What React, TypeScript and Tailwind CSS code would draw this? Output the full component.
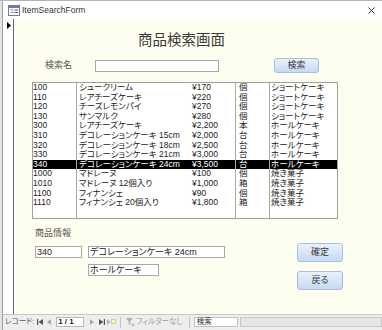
import React from "react";

type Item = { id: string; name: string; price: string; unit: string; cat: string };

const items: Item[] = [
  { id: "100", name: "シュークリーム", price: "¥170", unit: "個", cat: "ショートケーキ" },
  { id: "110", name: "レアチーズケーキ", price: "¥220", unit: "個", cat: "ショートケーキ" },
  { id: "120", name: "チーズレモンパイ", price: "¥270", unit: "個", cat: "ショートケーキ" },
  { id: "130", name: "サンマルク", price: "¥280", unit: "個", cat: "ショートケーキ" },
  { id: "300", name: "レアチーズケーキ", price: "¥2,200", unit: "本", cat: "ホールケーキ" },
  { id: "310", name: "デコレーションケーキ 15cm", price: "¥2,000", unit: "台", cat: "ホールケーキ" },
  { id: "320", name: "デコレーションケーキ 18cm", price: "¥2,500", unit: "台", cat: "ホールケーキ" },
  { id: "330", name: "デコレーションケーキ 21cm", price: "¥3,000", unit: "台", cat: "ホールケーキ" },
  { id: "340", name: "デコレーションケーキ 24cm", price: "¥3,500", unit: "台", cat: "ホールケーキ" },
  { id: "1000", name: "マドレーヌ", price: "¥100", unit: "個", cat: "焼き菓子" },
  { id: "1010", name: "マドレーヌ 12個入り", price: "¥1,000", unit: "箱", cat: "焼き菓子" },
  { id: "1100", name: "フィナンシェ", price: "¥90", unit: "個", cat: "焼き菓子" },
  { id: "1110", name: "フィナンシェ 20個入り", price: "¥1,800", unit: "箱", cat: "焼き菓子" },
];

const SELECTED = 8;

function Column({
  field,
  className,
  pad,
}: {
  field: keyof Item;
  className: string;
  pad: string;
}) {
  return (
    <div className={`flex flex-col ${className}`}>
      {items.map((it, i) => (
        <div
          key={it.id}
          className={`h-[9.6px] leading-[9.6px] whitespace-nowrap overflow-hidden ${pad} ${
            i === SELECTED ? "bg-black text-white" : "text-[#1c1c1c]"
          }`}
        >
          {it[field]}
        </div>
      ))}
    </div>
  );
}

function Button({ label }: { label: string }) {
  return (
    <div className="flex h-full w-full items-center justify-center rounded-[3px] border border-[#a3c0e6] bg-linear-to-b from-[#eaf1fb] to-[#c6daf3] text-[9px] text-[#3a3a3a]">
      {label}
    </div>
  );
}

function NavBar() {
  return (
    <div className="flex h-[16px] items-start border-t border-[#c8c8c8] bg-[#eeeeee] pt-[2px] text-[7.5px]">
      <span className="ml-[2px] h-[10px] leading-[10px] text-[#4a5a75]">レコード:</span>
      {/* first */}
      <svg className="ml-[3px] mt-[2px]" width="6" height="6" viewBox="0 0 6 6">
        <rect x="0" y="0" width="1.2" height="6" fill="#555" />
        <polygon points="6,0 6,6 1.5,3" fill="#555" />
      </svg>
      {/* prev */}
      <svg className="ml-[4px] mt-[2px]" width="4" height="6" viewBox="0 0 4 6">
        <polygon points="4,0 4,6 0,3" fill="#a8a8a8" />
      </svg>
      <div className="ml-[5px] flex h-[10px] w-[28px] items-center border border-[#b8b8b8] bg-white pl-[1px] text-[8px] font-bold text-[#222]">
        1 / 1
      </div>
      {/* next */}
      <svg className="ml-[6px] mt-[2px]" width="4" height="6" viewBox="0 0 4 6">
        <polygon points="0,0 0,6 4,3" fill="#a8a8a8" />
      </svg>
      {/* last */}
      <svg className="ml-[5px] mt-[2px]" width="6" height="6" viewBox="0 0 6 6">
        <polygon points="0,0 0,6 4.5,3" fill="#555" />
        <rect x="4.8" y="0" width="1.2" height="6" fill="#555" />
      </svg>
      {/* new */}
      <svg className="ml-[2px] mt-[1px]" width="9" height="8" viewBox="0 0 9 8">
        <polygon points="0,1 0,7 3.5,4" fill="#b4b4b4" />
        <rect x="4.5" y="1.5" width="4" height="4" fill="#fff6c8" stroke="#d8c37a" strokeWidth="0.8" />
      </svg>
      <div className="ml-[4px] h-[11px] w-px bg-[#c4c4c4]" />
      {/* filter */}
      <svg className="ml-[5px] mt-[1px]" width="9" height="9" viewBox="0 0 9 9">
        <polygon points="0,0 7,0 4.3,3.5 4.3,7 2.7,6 2.7,3.5" fill="#b0b0b0" />
        <path d="M5.5 5.5 L8.5 8.5 M8.5 5.5 L5.5 8.5" stroke="#b0b0b0" strokeWidth="0.9" />
      </svg>
      <span className="ml-px h-[10px] leading-[10px] text-[#a0a0a0]">フィルターなし</span>
      <div className="ml-[6px] h-[11px] w-px bg-[#c4c4c4]" />
      <div className="ml-[4px] flex h-[10px] w-[44px] items-center border border-[#c0c0c0] bg-white pl-[2px] text-[#333]">
        検索
      </div>
      <div className="ml-[2px] h-[10px] flex-1 border border-[#c8c8c8] bg-[#e6e6e6]" />
    </div>
  );
}

export default function App() {
  return (
    <div className="h-[330px] w-[382px] overflow-hidden border-t border-[#b4b4b4] bg-[#e2e4e2] font-['Liberation_Sans','Noto_Sans_CJK_JP',sans-serif] [font-feature-settings:'palt']">
      <div className="ml-[2px] flex h-[329px] flex-col border-l border-[#a0a0a0]">
        {/* title bar */}
        <div className="flex h-[18px] items-center bg-white">
          <svg className="ml-[5px]" width="12" height="11" viewBox="0 0 12 11">
            <rect x="0.5" y="0.5" width="11" height="10" fill="#fff" stroke="#6f7f9c" />
            <rect x="1" y="1" width="10" height="2" fill="#5b7fb8" />
            <rect x="2.5" y="4.5" width="3" height="1" fill="#7a8aa8" />
            <rect x="6.5" y="4.5" width="3.5" height="1" fill="#b03a3a" />
            <rect x="2.5" y="7" width="3" height="1" fill="#7a8aa8" />
            <rect x="6.5" y="7" width="3.5" height="1" fill="#b03a3a" />
          </svg>
          <span className="ml-[2px] text-[8.5px] text-[#333]">ItemSearchForm</span>
          <svg className="ml-auto mr-[7px]" width="7" height="7" viewBox="0 0 7 7">
            <path d="M0.5 0.5 L6.5 6.5 M6.5 0.5 L0.5 6.5" stroke="#333" strokeWidth="1" />
          </svg>
        </div>

        <div className="flex flex-1">
          {/* record selector */}
          <div className="w-[11px] border-r border-[#6a6a6a] bg-white pt-[3px]">
            <svg className="ml-[4px]" width="4" height="7" viewBox="0 0 4 7">
              <polygon points="0,0 0,7 4,3.5" fill="#000" />
            </svg>
          </div>

          {/* form body */}
          <div className="flex flex-1 flex-col bg-[#fefef0]">
            <div className="mt-[12px] h-[18px] pl-[124px] text-[14.5px] leading-[18px] text-[#3a3a3a]">
              商品検索画面
            </div>

            <div className="mt-[9px] flex items-start">
              <div className="ml-[31px] w-[50px] text-[9px] leading-[15px] text-[#555]">検索名</div>
              <div className="mt-[2px] h-[12px] w-[124px] border border-[#a8a8a8] bg-white" />
              <div className="ml-[55px] h-[15px] w-[45px]">
                <Button label="検索" />
              </div>
            </div>

            <div className="ml-[18px] mt-[9px] flex h-[137px] w-[306px] border border-[#a0a0a0] bg-white text-[8.5px]">
              <Column field="id" className="w-[44px] border-r border-[#a8a8a8]" pad="pl-0" />
              <Column field="name" className="w-[113px]" pad="pl-[2px]" />
              <Column field="price" className="w-[46px] border-r border-[#a8a8a8]" pad="pl-[2px]" />
              <Column field="unit" className="w-[34px] border-r border-[#a8a8a8]" pad="pl-[3px]" />
              <Column field="cat" className="flex-1" pad="pl-px" />
            </div>

            <div className="mt-[8px] flex items-start">
              <div className="ml-[21px] flex flex-col">
                <div className="h-[12px] text-[9px] leading-[12px] text-[#555]">商品情報</div>
                <div className="mt-[7px] flex">
                  <div className="h-[12px] w-[47px] border border-[#a8a8a8] bg-white pl-px text-[9px] leading-[10px] text-[#222]">
                    340
                  </div>
                  <div className="ml-[6px] h-[12px] w-[137px] border border-[#a8a8a8] bg-white pl-px text-[9px] leading-[10px] text-[#222]">
                    デコレーションケーキ 24cm
                  </div>
                </div>
                <div className="ml-[53px] mt-[6px] h-[12px] w-[71px] border border-[#a8a8a8] bg-white pl-px text-[9px] leading-[10px] text-[#222]">
                  ホールケーキ
                </div>
              </div>
              <div className="ml-[72px] mt-[16px] flex flex-col gap-[9px]">
                <div className="h-[19px] w-[46px]">
                  <Button label="確定" />
                </div>
                <div className="h-[19px] w-[46px]">
                  <Button label="戻る" />
                </div>
              </div>
            </div>
          </div>
        </div>

        <NavBar />
      </div>
    </div>
  );
}
